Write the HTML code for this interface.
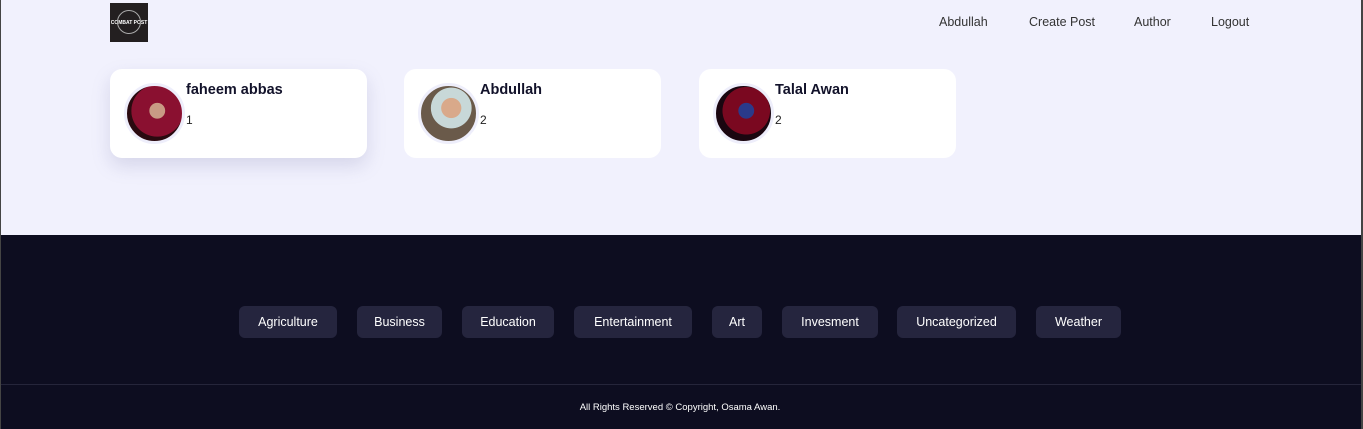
<!DOCTYPE html>
<html><head><meta charset="utf-8"><style>
*{margin:0;padding:0;box-sizing:border-box}
body{width:1363px;height:429px;overflow:hidden;background:#f1f1fd;font-family:"Liberation Sans",sans-serif;position:relative}
.a{position:absolute}
.logo{left:110px;top:3px;width:38px;height:39px;background:#231f20;color:#fff;font-size:5px;font-weight:bold;display:flex;align-items:center;justify-content:center}
.logo i{position:absolute;width:24px;height:24px;border:1px solid #aaa;border-radius:50%;left:7px;top:7px}
.nav{top:15px;font-size:12.5px;color:#333}
.card{top:69px;width:257px;height:89px;background:#fff;border-radius:12px}
.card.s{box-shadow:0 8px 18px rgba(120,120,170,.22)}
.av{left:14px;top:14px;width:61px;height:61px;border-radius:50%;border:3px solid #eeeefb}
.nm{left:76px;top:13px;font-weight:bold;font-size:14.5px;color:#12122a}
.no{left:76px;top:44px;font-size:12px;color:#222}
.foot{left:0;top:235px;width:1363px;height:194px;background:#0d0d20}
.pill{top:306px;height:32px;background:#25253e;color:#fff;border-radius:6px;font-size:12.5px;display:flex;align-items:center;justify-content:center}
</style></head><body>
<div class="a logo"><i></i>COMBAT POST</div>
<div class="a nav" style="left:939px">Abdullah</div>
<div class="a nav" style="left:1029px">Create Post</div>
<div class="a nav" style="left:1134px">Author</div>
<div class="a nav" style="left:1211px">Logout</div>

<div class="a card s" style="left:110px"><div class="a av" style="background:radial-gradient(circle at 55% 45%,#c89a84 0 18%,#8a1030 19% 60%,#2a0a10 61%)"></div><div class="a nm">faheem abbas</div><div class="a no">1</div></div>
<div class="a card" style="left:404px"><div class="a av" style="background:radial-gradient(circle at 55% 40%,#d9a98a 0 22%,#c8d8d8 23% 45%,#6a5a4a 46%)"></div><div class="a nm">Abdullah</div><div class="a no">2</div></div>
<div class="a card" style="left:699px"><div class="a av" style="background:radial-gradient(circle at 55% 45%,#2a3a8a 0 18%,#7a0820 19% 55%,#1a0610 56%)"></div><div class="a nm">Talal Awan</div><div class="a no">2</div></div>

<div class="a foot"></div>
<div class="a pill" style="left:239px;width:98px">Agriculture</div>
<div class="a pill" style="left:357px;width:85px">Business</div>
<div class="a pill" style="left:462px;width:92px">Education</div>
<div class="a pill" style="left:574px;width:118px">Entertainment</div>
<div class="a pill" style="left:712px;width:50px">Art</div>
<div class="a pill" style="left:782px;width:96px">Invesment</div>
<div class="a pill" style="left:897px;width:119px">Uncategorized</div>
<div class="a pill" style="left:1036px;width:85px">Weather</div>
<div class="a" style="left:0;top:384px;width:1363px;height:1px;background:#25253a"></div>
<div class="a" style="left:0;top:402px;width:1360px;text-align:center;color:#fff;font-size:9.5px">All Rights Reserved © Copyright, Osama Awan.</div>
<div class="a" style="left:0;top:0;width:1px;height:429px;background:#444"></div>
<div class="a" style="left:1361px;top:0;width:2px;height:429px;background:#444"></div>
</body></html>
